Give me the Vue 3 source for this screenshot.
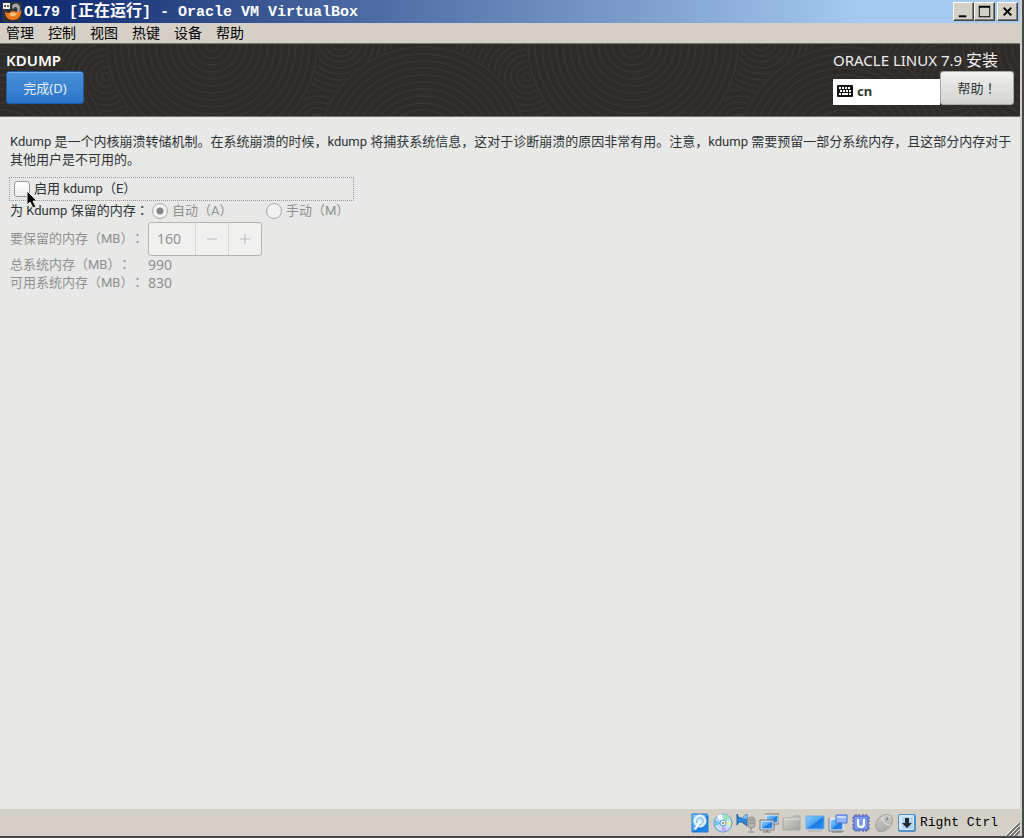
<script setup>
import { ref } from 'vue'

const menus = ['管理', '控制', '视图', '热键', '设备', '帮助']
const enabled = ref(false)
const mode = ref('auto')
const reserved = ref('160')

const radii = (r) => {
  const out = []
  const step = r > 100 ? 7 : 6
  for (let n = r; n > 2; n -= step) out.push(n)
  return out
}
const base = [
  { x: 318, y: 80, r: 52 },
  { x: 340, y: -4, r: 52 },
  { x: 106, y: 33, r: 76 },
  { x: 2, y: 108, r: 105 },
  { x: 212, y: 0, r: 105 }
]
const discs = [-1, 0, 1, 2, 3, 4].flatMap((t) =>
  base.map((d, i) => ({ ...d, x: d.x + t * 421, order: i }))
).sort((a, b) => a.order - b.order)
</script>

<template>
  <div class="window">
    <header class="titlebar">
      <svg class="logo" viewBox="0 0 20 20" aria-hidden="true">
        <rect width="20" height="20" rx="1" fill="#30343a" />
        <path d="M10 4c2-4 8-3 8 2l-1 5-4 2c3-4 3-7 1-8-2 0-3 2-3 3z" fill="#a3a8ac" />
        <path d="M3 9c2 3 3 1 5 2 2-4 6-1 7-1 2 1 4-2 4-3 1 6-2 11-8 11-5 0-8-3-8-9z" fill="#ed791c" />
        <path d="M7 12c3-3 7-1 8 0-2 3-6 3-8 0z" fill="#ffc477" />
        <rect x="1" y="1" width="7" height="6" fill="#f4f4ee" />
        <path d="M2 3h2v2H2zm3 0h2v2H5z" fill="#555" />
      </svg>
      <h1>OL79 [<span>正在运行</span>] - Oracle VM VirtualBox</h1>
      <div class="controls">
        <button type="button" aria-label="最小化"><svg viewBox="0 0 20 18"><path d="M5 13h8v2H5z" /></svg></button>
        <button type="button" aria-label="最大化"><svg viewBox="0 0 20 18"><path d="M4 3h12v12H4zm1 2v9h10V5z" fill-rule="evenodd" /></svg></button>
        <button type="button" class="close" aria-label="关闭"><svg viewBox="0 0 20 18"><path d="M6 5l8 8M14 5l-8 8" stroke="#000" stroke-width="2" /></svg></button>
      </div>
    </header>

    <nav class="menubar">
      <button v-for="m in menus" :key="m" type="button">{{ m }}</button>
    </nav>

    <section class="banner">
      <svg class="pattern" aria-hidden="true">
        <g v-for="(d, i) in discs" :key="i">
          <circle :cx="d.x" :cy="d.y" :r="d.r + 2" fill="#2f2b28" />
          <circle v-for="r in radii(d.r)" :key="r" :cx="d.x" :cy="d.y" :r="r" fill="none" stroke="#373330" stroke-width="2" />
        </g>
      </svg>
      <div class="left">
        <h2>KDUMP</h2>
        <button type="button" class="done">完成(D)</button>
      </div>
      <div class="right">
        <p>ORACLE LINUX 7.9 <span>安装</span></p>
        <div class="tools">
          <button type="button" class="keyboard">
            <svg viewBox="0 0 16 12" aria-hidden="true">
              <rect width="16" height="12" rx="1" fill="#111" />
              <path d="M2 3h12M3 6h11" stroke="#fff" stroke-width="2" stroke-dasharray="2 1" />
              <path d="M2 9h2m1 0h6m1 0h2" stroke="#fff" stroke-width="2" />
            </svg>
            cn
          </button>
          <button type="button" class="help">帮助<span class="mid">！</span></button>
        </div>
      </div>
    </section>

    <main>
      <p class="intro">Kdump 是一个内核崩溃转储机制。在系统崩溃的时候，kdump 将捕获系统信息，这对于诊断崩溃的原因非常有用。注意，kdump 需要预留一部分系统内存，且这部分内存对于其他用户是不可用的。</p>
      <div class="form">
        <label class="enable">
          <input v-model="enabled" type="checkbox" />启用 kdump（E）
          <svg class="pointer" viewBox="0 0 12 19" aria-hidden="true">
            <path d="M1 1v14l3-3 3 6 3-1-3-6h4z" fill="#000" stroke="#eee" stroke-width="1" />
          </svg>
        </label>
        <span id="mode-label">为 Kdump 保留的内存<span class="mid">：</span></span>
        <div class="modes" role="radiogroup" aria-labelledby="mode-label">
          <label><input v-model="mode" type="radio" name="mode" value="auto" :disabled="!enabled" />自动（A）</label>
          <label><input v-model="mode" type="radio" name="mode" value="manual" :disabled="!enabled" />手动（M）</label>
        </div>
        <label class="dim" for="reserved">要保留的内存（MB）<span class="mid">：</span></label>
        <div class="spin">
          <input id="reserved" v-model="reserved" type="text" :disabled="!enabled" />
          <button type="button" aria-label="减少" :disabled="!enabled"><svg viewBox="0 0 12 12"><path d="M1 6h10" /></svg></button>
          <button type="button" aria-label="增加" :disabled="!enabled"><svg viewBox="0 0 12 12"><path d="M1 6h10M6 1v10" /></svg></button>
        </div>
        <span class="dim">总系统内存（MB）<span class="mid">：</span></span>
        <span class="dim num">990</span>
        <span class="dim">可用系统内存（MB）<span class="mid">：</span></span>
        <span class="dim num">830</span>
      </div>
    </main>

    <footer class="statusbar">
      <svg width="0" height="0" class="defs" aria-hidden="true">
        <defs>
          <linearGradient id="blue" x1="0" y1="0" x2="1" y2="1">
            <stop offset="0" stop-color="#8fd0fb" /><stop offset=".5" stop-color="#4aa3f2" /><stop offset=".55" stop-color="#1a78e0" /><stop offset="1" stop-color="#2f93ef" />
          </linearGradient>
          <linearGradient id="grey" x1="0" y1="0" x2="1" y2="1">
            <stop offset="0" stop-color="#d6d6d1" /><stop offset="1" stop-color="#a2a29e" />
          </linearGradient>
        </defs>
      </svg>
      <svg class="icon" viewBox="0 0 20 20" aria-hidden="true">
        <path d="M2 1h15l1 2v16H2z" fill="url(#blue)" stroke="#227bcc" />
        <circle cx="10" cy="8" r="6" fill="#d8edfb" stroke="#fff" />
        <path d="M7 10c-2-5 5-7 6-3 1 4-4 4-6 8l-3 2" fill="none" stroke="#65a5d8" stroke-width="1" />
        <path d="M9 8l-5 8 2 1 5-8z" fill="#fff" />
      </svg>
      <svg class="icon" viewBox="0 0 20 20" aria-hidden="true">
        <circle cx="10" cy="10" r="9" fill="#c8e0f5" stroke="#4f99d4" />
        <path d="M10 10L4 3a9 9 0 0 1 5-2z" fill="#fff" />
        <path d="M10 10l1-9a9 9 0 0 1 6 4z" fill="#9fe3b5" />
        <path d="M10 10l8-2v5z" fill="#f0e79a" />
        <path d="M10 10l4 8-6 1z" fill="#c6a7ee" />
        <path d="M10 10l-8 3V7z" fill="#78c5f5" />
        <circle cx="10" cy="10" r="3" fill="#eff7ff" stroke="#4f99d4" />
        <circle cx="10" cy="10" r="1" fill="#777" />
      </svg>
      <svg class="icon" viewBox="0 0 20 20" aria-hidden="true">
        <path d="M1 1l2 4h3l5-4v12L6 9H3l-2 3z" fill="#2f86d6" stroke="#1c62a6" />
        <path d="M5 5l6-4v5z" fill="#79bdf0" />
        <rect x="12" y="4" width="7" height="11" rx="3" fill="#b4b4b0" stroke="#959592" />
        <path d="M13 7h5m-5 3h5m-3 5v3m-3 1h6" stroke="#888" stroke-width="1" />
      </svg>
      <svg class="icon" viewBox="0 0 20 20" aria-hidden="true">
        <path d="M7 2h12v8H7z" fill="url(#blue)" stroke="#f5f5f5" />
        <path d="M6 1h14v10h-5v2" fill="none" stroke="#777" />
        <path d="M2 8h12v8H2z" fill="url(#blue)" stroke="#f5f5f5" />
        <path d="M1 7h14v10H1zM4 19h8M8 17v2" fill="none" stroke="#777" />
      </svg>
      <svg class="icon" viewBox="0 0 20 20" aria-hidden="true">
        <path d="M1 17V5h9l2-2h6v14z" fill="url(#grey)" stroke="#a6a6a0" />
        <path d="M2 6h16" stroke="#e0e0dc" />
      </svg>
      <svg class="icon" viewBox="0 0 20 20" aria-hidden="true">
        <path d="M1 3h18v13H1z" fill="url(#blue)" stroke="#6daee5" />
        <path d="M3 18h14" stroke="#aaa" stroke-width="1" />
      </svg>
      <svg class="icon" viewBox="0 0 20 20" aria-hidden="true">
        <path d="M2 6h13v11H2z" fill="url(#blue)" stroke="#fff" />
        <path d="M1 5v13h15M4 19h10" fill="none" stroke="#777" />
        <path d="M8 2h11v8H8z" fill="#93b5fb" stroke="#4c72d8" />
        <path d="M9 3h9v2H9z" fill="#c8d9ff" />
      </svg>
      <svg class="icon" viewBox="0 0 20 20" aria-hidden="true">
        <path d="M5 1v18M8 1v18M12 1v18M15 1v18M1 5h18M1 8h18M1 12h18M1 15h18" stroke="#4452a7" />
        <rect x="3" y="3" width="14" height="14" fill="#7f9cf2" stroke="#4659bd" />
        <path d="M7 6v5c0 4 6 4 6 0V6" fill="none" stroke="#fff" stroke-width="2" />
      </svg>
      <svg class="icon" viewBox="0 0 20 20" aria-hidden="true">
        <ellipse cx="10" cy="10" rx="7" ry="10" transform="rotate(45 10 10)" fill="url(#grey)" stroke="#a8a8a3" />
        <path d="M8 4c0 4 4 8 8 8M12 8l4-5" fill="none" stroke="#ececE8" />
        <ellipse cx="13" cy="6" rx="1" ry="2" transform="rotate(45 13 6)" fill="#8a8a86" />
      </svg>
      <svg class="icon" viewBox="0 0 20 20" aria-hidden="true">
        <rect x="1" y="1" width="18" height="18" rx="2" fill="#4f91c6" />
        <rect x="2" y="2" width="15" height="15" rx="1" fill="#d4e9f8" />
        <rect x="5" y="4" width="11" height="12" fill="#b4d4ec" />
        <path d="M8 5h4v5h3l-5 5-5-5h3z" fill="#202a34" />
      </svg>
      <span class="host">Right Ctrl</span>
      <svg class="grip" viewBox="0 0 14 14" aria-hidden="true">
        <path d="M1 14L14 1M5 14l9-9M9 14l5-5" stroke="#77736b" stroke-width="2" />
        <path d="M0 13L13 0M4 13l9-9M8 13l5-5" stroke="#fff" />
      </svg>
    </footer>
  </div>
</template>

<style>
html,
body,
#app {
  height: 100%;
}
body {
  margin: 0;
}
</style>

<style scoped>
* {
  box-sizing: border-box;
}
.window {
  display: flex;
  flex-direction: column;
  min-height: 100%;
  background: #d4d0c8;
  border-right: 2px solid #44464a;
  border-bottom: 2px solid #44464a;
  padding-right: 2px;
  font: 13px/18px "Noto Sans", "Noto Sans CJK SC", sans-serif;
  color: #2e3436;
}
button,
input {
  font: inherit;
  margin: 0;
  padding: 0;
}
h1,
h2,
p {
  margin: 0;
}
.titlebar {
  display: flex;
  align-items: center;
  height: 23px;
  padding: 0 2px;
  background: linear-gradient(90deg, #0a246a, #a6caf0 85%);
}
.logo {
  width: 20px;
  height: 20px;
}
h1 {
  flex: 1;
  padding: 2px 0 0 2px;
  color: #fff;
  font: bold 15px/21px "Liberation Mono", "Noto Sans CJK SC", monospace;
  white-space: nowrap;
}
h1 span {
  font-size: 16px;
}
.controls {
  display: flex;
}
.controls button {
  width: 21px;
  height: 19px;
  background: #d4d0c8;
  border: 1px solid;
  border-color: #fff #404040 #404040 #fff;
  box-shadow: inset -1px -1px #808080;
}
.controls svg {
  display: block;
  width: 100%;
}
.controls .close {
  margin-left: 2px;
}
.menubar {
  display: flex;
  gap: 14px;
  height: 21px;
  padding-left: 6px;
  border-bottom: 1px solid #77756f;
}
.menubar button {
  border: 0;
  background: none;
  color: #000;
  font: 14px/20px "Liberation Sans", "Noto Sans CJK SC", sans-serif;
}
.banner {
  position: relative;
  display: flex;
  justify-content: space-between;
  height: 73px;
  padding: 6px 6px 0;
  background: #2f2b28;
  border-bottom: 1px solid #777572;
}
.pattern {
  position: absolute;
  inset: 0;
  width: 100%;
  height: 100%;
}
.left,
.right {
  position: relative;
}
h2,
.right p {
  margin-bottom: 1px;
  font-size: 15px;
  line-height: 20px;
}
h2 {
  color: #fff;
  font-weight: 600;
}
.done {
  display: block;
  width: 78px;
  height: 33px;
  border: 1px solid #1c5da8;
  border-radius: 3px;
  background: linear-gradient(#4a90d9, #2a76c6);
  box-shadow: inset 0 1px #78aee6;
  color: #e6eef8;
}
.right p {
  color: #eee;
}
.right p span {
  font-size: 16px;
}
.tools {
  display: flex;
  align-items: flex-end;
}
.keyboard {
  display: flex;
  align-items: center;
  gap: 4px;
  width: 107px;
  height: 26px;
  padding: 0 0 2px 4px;
  border: 0;
  background: #fff;
  color: #2e3436;
  font-weight: bold;
}
.keyboard svg {
  width: 16px;
  height: 12px;
}
.help {
  width: 74px;
  height: 34px;
  border: 1px solid #aaa9a5;
  border-radius: 3px;
  background: linear-gradient(#f0f0ef, #d2d2d0);
  color: #2e3436;
}
.mid {
  font-family: "Noto Sans CJK TC", sans-serif;
  line-height: 1;
}
.dim .mid {
  margin-left: 4px;
}
main {
  flex: 1;
  padding: 16px 8px 16px 10px;
  background: #e8e8e7;
  font-family: Roboto, "Noto Sans CJK SC", sans-serif;
}
.intro {
  padding-bottom: 8px;
}
.form {
  display: grid;
  grid-template-columns: 138px 206px;
  align-items: center;
}
.enable {
  position: relative;
  grid-column: 1 / -1;
  display: flex;
  align-items: center;
  height: 24px;
  margin-left: -1px;
  padding-left: 4px;
  border: 1px dotted #999;
}
.enable input {
  appearance: none;
  width: 16px;
  height: 16px;
  margin-right: 4px;
  border: 1px solid #999;
  border-radius: 3px;
  background: linear-gradient(#fff, #eee);
}
.pointer {
  position: absolute;
  left: 16px;
  top: 12px;
  width: 12px;
  height: 19px;
  z-index: 1;
}
#mode-label,
.form > .dim {
  white-space: nowrap;
}
.modes {
  display: grid;
  grid-template-columns: 114px 1fr;
  height: 20px;
  padding-left: 4px;
}
.modes label {
  display: flex;
  align-items: center;
  gap: 4px;
  color: #8f9190;
  white-space: nowrap;
}
.modes input {
  appearance: none;
  width: 16px;
  height: 16px;
  border: 1px solid #aaa;
  border-radius: 50%;
  background: #f2f2f1;
}
.modes input:checked {
  background: radial-gradient(circle, #858785 3px, #f2f2f1 4px);
}
.dim {
  color: #8f9190;
}
.num,
.spin input {
  font-family: "Noto Sans", sans-serif;
  font-size: 14px;
}
.spin {
  display: grid;
  grid-template-columns: 46px 33px 33px;
  width: 114px;
  height: 34px;
  margin-top: 1px;
  border: 1px solid #b4b4b0;
  border-radius: 3px;
  background: #f0f0ef;
  overflow: hidden;
}
.spin input {
  width: 100%;
  padding-left: 8px;
  border: 0;
  background: none;
  color: #8f9190;
}
.spin button {
  display: grid;
  place-items: center;
  border: 0;
  border-left: 1px solid #d8d8d5;
  background: none;
}
.spin svg {
  width: 12px;
  height: 12px;
  fill: none;
  stroke: #b8bab8;
  stroke-width: 1;
}
.statusbar {
  display: flex;
  align-items: center;
  justify-content: flex-end;
  gap: 3px;
  height: 27px;
}
.defs {
  position: absolute;
}
.icon {
  width: 20px;
  height: 20px;
}
.host {
  color: #000;
  font: 13px/20px "Liberation Mono", monospace;
}
.grip {
  align-self: flex-end;
  width: 14px;
  height: 14px;
  margin-left: 5px;
}
</style>
